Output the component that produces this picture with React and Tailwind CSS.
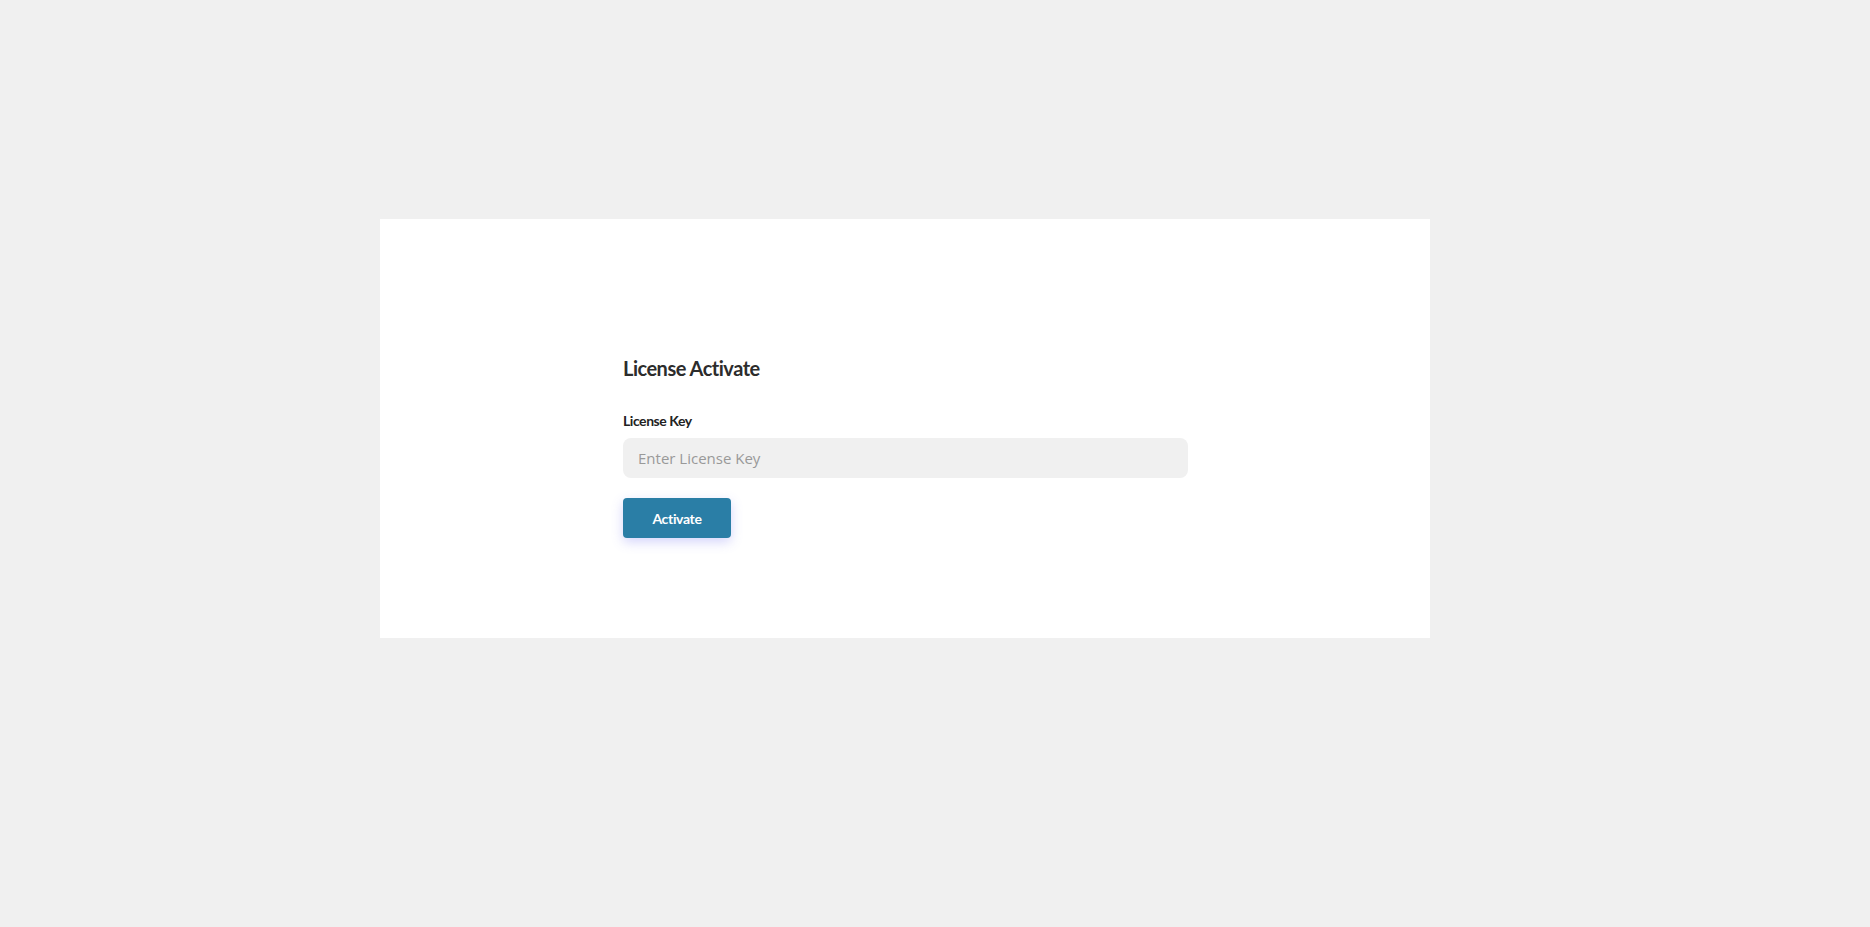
import React, { useState } from "react";

export default function App() {
  const [licenseKey, setLicenseKey] = useState("");

  return (
    <div className="min-h-screen bg-[#f0f0f0] pt-[219px] pl-[380px]">
      {/* --- LICENSE CARD --- */}
      <div className="w-[1050px] bg-white pt-[135px] pb-[100px] pl-[243px]">
        <h2 className="text-[20px] leading-[28px] font-bold tracking-[-0.5px] text-[#2c2c2c] mb-[29px] font-['Lato',sans-serif]">
          License Activate
        </h2>

        <label
          htmlFor="license-key"
          className="block text-[14px] leading-[20px] font-bold tracking-[-0.45px] text-[#222] font-['Lato',sans-serif]"
        >
          License Key
        </label>
        <input
          id="license-key"
          type="text"
          value={licenseKey}
          onChange={(e) => setLicenseKey(e.target.value)}
          placeholder="Enter License Key"
          className="mt-[7px] block w-[565px] h-10 rounded-lg bg-[#f0f0f0] px-[15px] text-[15px] text-[#333] placeholder:text-[#999] outline-none font-['Open_Sans',sans-serif]"
        />

        <button
          type="button"
          className="mt-[20px] w-[108px] h-10 rounded bg-[#2a7ea6] text-white text-[14px] font-bold tracking-[-0.35px] shadow-[0_4px_12px_rgba(99,102,241,0.28)] font-['Lato',sans-serif]"
        >
          Activate
        </button>
      </div>
    </div>
  );
}
